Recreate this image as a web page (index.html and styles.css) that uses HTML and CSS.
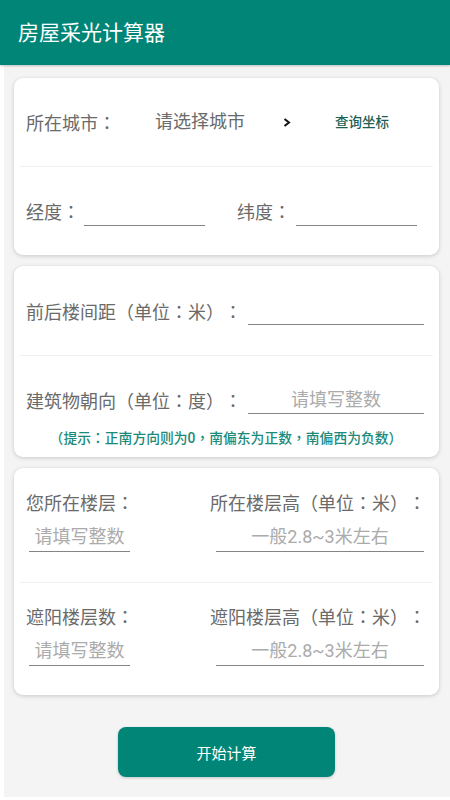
FILE: index.html
```html
<!DOCTYPE html>
<html lang="zh-CN">
<head>
<meta charset="utf-8">
<title>房屋采光计算器</title>
<link rel="stylesheet" href="styles.css">
</head>
<body>
<header class="appbar"><h1 class="title">房屋采光计算器</h1></header>
<main class="main">
  <section class="card">
    <div class="row row-city">
      <span class="label label-city">所在城市<span class="pu" lang="zh-TW">：</span></span>
      <span class="city">请选择城市</span>
      <svg class="chev" width="8" height="9" viewBox="0 0 8 9"><path d="M1.5 1 L6 4.5 L1.5 8" fill="none" stroke="#111" stroke-width="2"/></svg>
      <span class="query">查询坐标</span>
    </div>
    <div class="divider"></div>
    <div class="row row-coord">
      <span class="label label-3">经度<span class="pu" lang="zh-TW">：</span></span>
      <div class="input input-coord input-first"></div>
      <span class="label label-3 label-lat">纬度<span class="pu" lang="zh-TW">：</span></span>
      <div class="input input-coord input-lat"></div>
    </div>
  </section>

  <section class="card">
    <div class="row row-dist">
      <span class="label label-12">前后楼间距（单位<span class="pu" lang="zh-TW">：</span>米）<span class="pu" lang="zh-TW">：</span></span>
      <div class="input input-wide"></div>
    </div>
    <div class="divider"></div>
    <div class="row row-orient">
      <div class="field-row">
        <span class="label label-12">建筑物朝向（单位<span class="pu" lang="zh-TW">：</span>度）<span class="pu" lang="zh-TW">：</span></span>
        <div class="input input-wide"><span class="ph">请填写整数</span></div>
      </div>
      <p class="hint">（提示<span class="pu" lang="zh-TW">：</span>正南方向则为0<span class="pu" lang="zh-TW">，</span>南偏东为正数<span class="pu" lang="zh-TW">，</span>南偏西为负数）</p>
    </div>
  </section>

  <section class="card">
    <div class="row row-two row-two-a">
      <div class="col col-left">
        <span class="label">您所在楼层<span class="pu" lang="zh-TW">：</span></span>
        <div class="input input-left"><span class="ph">请填写整数</span></div>
      </div>
      <div class="col col-right">
        <span class="label">所在楼层高（单位<span class="pu" lang="zh-TW">：</span>米）<span class="pu" lang="zh-TW">：</span></span>
        <div class="input input-right"><span class="ph">一般2.8~3米左右</span></div>
      </div>
    </div>
    <div class="divider"></div>
    <div class="row row-two row-two-b">
      <div class="col col-left">
        <span class="label">遮阳楼层数<span class="pu" lang="zh-TW">：</span></span>
        <div class="input input-left"><span class="ph">请填写整数</span></div>
      </div>
      <div class="col col-right">
        <span class="label">遮阳楼层高（单位<span class="pu" lang="zh-TW">：</span>米）<span class="pu" lang="zh-TW">：</span></span>
        <div class="input input-right"><span class="ph">一般2.8~3米左右</span></div>
      </div>
    </div>
  </section>

  <div class="btn-wrap"><button class="btn">开始计算</button></div>
</main>
</body>
</html>
```

FILE: styles.css
```css
* { box-sizing: border-box; }
html, body { margin: 0; padding: 0; }
body {
  width: 450px;
  height: 800px;
  background: #ffffff;
  font-family: Roboto, "Noto Sans CJK SC", "Noto Sans", sans-serif;
  text-spacing-trim: space-all;
  overflow: hidden;
}
.pu {
  font-family: "Noto Sans CJK TC", "Noto Sans CJK SC", sans-serif;
  font-feature-settings: "locl" 1;
}
.appbar {
  height: 65px;
  background: #008577;
  display: flex;
  align-items: center;
  padding-left: 18px;
  box-shadow: 0 1px 2px rgba(0,0,0,0.22);
  position: relative;
  z-index: 2;
}
.title {
  margin: 0;
  height: 28px;
  font-size: 21px;
  font-weight: 400;
  color: #ffffff;
  line-height: 28px;
}
.main {
  margin-left: 4px;
  height: 732px;
  background: #f4f4f4;
  padding: 13px 11px 0 10px;
}
.card {
  background: #ffffff;
  border-radius: 9px;
  box-shadow: 0 1px 4px rgba(0,0,0,0.18);
  padding: 0 13px 0 12px;
  margin-bottom: 11px;
}
.divider {
  height: 1px;
  background: #f1f1f1;
  margin: 0 -7px 0 -6px;
}
.row { display: flex; align-items: center; }
.label {
  display: block;
  height: 26px;
  font-size: 18px;
  line-height: 26px;
  color: #6a6a6a;
  white-space: nowrap;
  flex: none;
}
.input {
  border-bottom: 1px solid #858585;
  display: flex;
  align-items: center;
  justify-content: center;
  flex: none;
}
.ph {
  display: block;
  height: 26px;
  font-size: 18px;
  line-height: 26px;
  color: #ababab;
  white-space: nowrap;
}

/* card 1 */
.row-city { height: 88px; }
.label-city { width: 129px; }
.city {
  display: block;
  height: 26px;
  width: 128px;
  font-size: 18px;
  line-height: 26px;
  color: #6a6a6a;
  white-space: nowrap;
}
.chev { flex: none; margin-top: 1px; }
.query {
  display: block;
  height: 20px;
  line-height: 20px;
  margin-left: 44px;
  font-size: 13.5px;
  font-weight: 500;
  color: #1e5f55;
  white-space: nowrap;
}
.row-coord { height: 88px; }
.label-3 { width: 54px; }
.input-coord { width: 121px; height: 30px; }
.input-first { margin-left: 4px; }
.label-lat { margin-left: 32px; }
.input-lat { margin-left: 5px; }

/* card 2 */
.row-dist { height: 89px; }
.label-12 { width: 216px; }
.input-wide { width: 176px; height: 28px; margin-left: 6px; }
.row-orient {
  flex-direction: column;
  align-items: stretch;
  padding-top: 29px;
  padding-bottom: 11px;
}
.field-row { display: flex; align-items: center; height: 30px; }
.hint {
  margin: 13px 0 0 0;
  height: 18px;
  text-align: center;
  font-size: 13.8px;
  line-height: 18px;
  font-weight: 500;
  color: #1a8a7a;
  white-space: nowrap;
}

/* card 3 */
.row-two {
  align-items: flex-start;
  justify-content: space-between;
}
.row-two-a { padding: 21px 0 30px 0; }
.row-two-b { padding: 20px 0 29px 0; }
.col { display: flex; flex-direction: column; }
.input-left { width: 101px; height: 30px; margin: 7px 0 0 3px; }
.col-right { width: 216px; }
.input-right { width: 208px; height: 30px; margin: 7px 0 0 6px; }

/* button */
.btn-wrap { display: flex; justify-content: center; padding-top: 21px; }
.btn {
  width: 217px;
  height: 50px;
  border: none;
  border-radius: 8px;
  background: #008577;
  color: #ffffff;
  font-family: Roboto, "Noto Sans CJK SC", sans-serif;
  font-size: 15px;
  box-shadow: 0 1px 3px rgba(0,0,0,0.2);
  padding: 0;
}
```
